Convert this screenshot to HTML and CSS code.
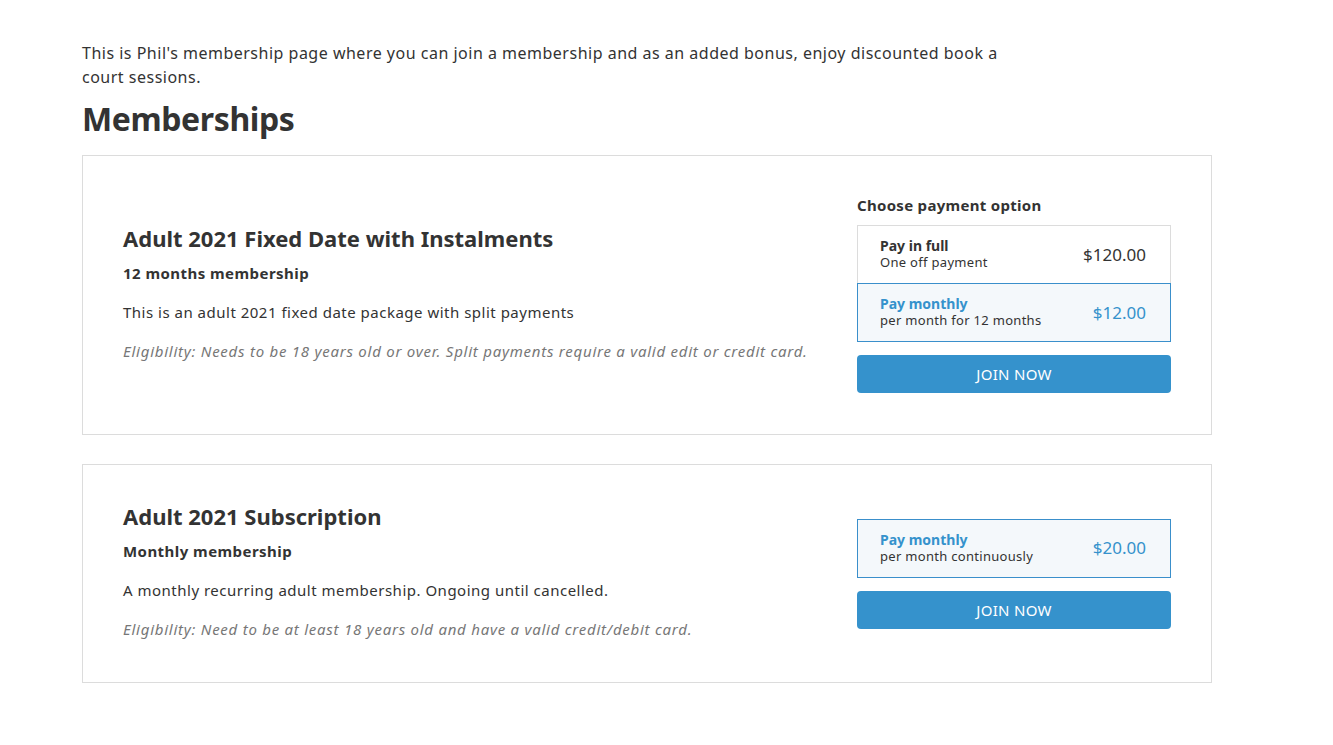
FILE: index.html
```html
<!DOCTYPE html>
<html lang="en">
<head>
    <meta charset="UTF-8">
    <meta name="viewport" content="width=device-width, initial-scale=1.0">
    <title>Memberships</title>
    <link rel="stylesheet" href="styles.css">
</head>
<body>

    <main class="page">
        <p class="intro">This is Phil's membership page where you can join a membership and as an added bonus, enjoy discounted book a court sessions.</p>

        <h1>Memberships</h1>

        <!-- Fixed date membership -->
        <section class="card">
            <div class="card-info">
                <h2>Adult 2021 Fixed Date with Instalments</h2>
                <h3>12 months membership</h3>
                <p class="desc">This is an adult 2021 fixed date package with split payments</p>
                <p class="elig">Eligibility: Needs to be 18 years old or over. Split payments require a valid edit or credit card.</p>
            </div>
            <div class="card-pay choose">
                <h4>Choose payment option</h4>
                <div class="options">
                    <div class="option">
                        <div class="option-text">
                            <strong>Pay in full</strong>
                            <span>One off payment</span>
                        </div>
                        <div class="price">$120.00</div>
                    </div>
                    <div class="option selected">
                        <div class="option-text">
                            <strong>Pay monthly</strong>
                            <span>per month for 12 months</span>
                        </div>
                        <div class="price">$12.00</div>
                    </div>
                </div>
                <button class="join">JOIN NOW</button>
            </div>
        </section>

        <!-- Subscription -->
        <section class="card">
            <div class="card-info">
                <h2>Adult 2021 Subscription</h2>
                <h3>Monthly membership</h3>
                <p class="desc">A monthly recurring adult membership. Ongoing until cancelled.</p>
                <p class="elig">Eligibility: Need to be at least 18 years old and have a valid credit/debit card.</p>
            </div>
            <div class="card-pay">
                <div class="options">
                    <div class="option selected">
                        <div class="option-text">
                            <strong>Pay monthly</strong>
                            <span>per month continuously</span>
                        </div>
                        <div class="price">$20.00</div>
                    </div>
                </div>
                <button class="join">JOIN NOW</button>
            </div>
        </section>
    </main>

</body>
</html>
```

FILE: styles.css
```css
/* Base */
body {
    margin: 0;
    font-family: 'Noto Sans', 'Open Sans', sans-serif;
    color: #333;
    background: #fff;
}

.page {
    width: 1130px;
    margin-left: 82px;
    padding-top: 41px;
}

.intro {
    margin: 0;
    max-width: 940px;
    font-size: 16px;
    line-height: 24px;
    letter-spacing: 0.5px;
}

h1 {
    margin: 10px 0 16px;
    font-size: 32px;
    line-height: 40px;
    font-weight: 700;
    letter-spacing: -0.4px;
}

/* Membership card */
.card {
    display: flex;
    align-items: center;
    justify-content: space-between;
    border: 1px solid #dcdcdc;
    padding: 36px 40px;
    margin-bottom: 29px;
}

.card-info {
    padding-bottom: 5px;
}

.card-info h2 {
    margin: 0;
    font-size: 22px;
    line-height: 30px;
}

.card-info h3 {
    margin: 8px 0 0;
    font-size: 15px;
    line-height: 24px;
    letter-spacing: 0.45px;
}

.card-info p {
    margin: 15px 0 0;
    font-size: 15px;
    line-height: 24px;
    letter-spacing: 0.5px;
}

.card-info .elig {
    font-style: italic;
    color: #777;
    letter-spacing: 0.75px;
}

/* Payment column */
.card-pay {
    width: 314px;
    flex-shrink: 0;
    padding: 2px 0;
}

.card-pay.choose {
    padding: 0 0 5px;
}

.card-pay h4 {
    margin: 0 0 7px;
    font-size: 15px;
    line-height: 26px;
    letter-spacing: 0.3px;
}

.option {
    display: flex;
    align-items: center;
    justify-content: space-between;
    border: 1px solid #dcdcdc;
    padding: 12px 24px 13px 22px;
    background: #fff;
}

.option + .option {
    margin-top: -1px;
}

.option-text strong {
    display: block;
    font-size: 14px;
    line-height: 16px;
}

.option-text span {
    display: block;
    font-size: 13px;
    line-height: 16px;
    letter-spacing: 0.3px;
}

.price {
    font-size: 17px;
}

.option.selected {
    position: relative;
    border-color: #3a8fcb;
    background: #f4f8fb;
}

.option.selected strong,
.option.selected .price {
    color: #3592cc;
}

.join {
    display: block;
    width: 100%;
    height: 38px;
    margin-top: 13px;
    border: none;
    border-radius: 4px;
    background: #3592cc;
    color: #fff;
    font-family: inherit;
    font-size: 15px;
    letter-spacing: 0.3px;
    cursor: pointer;
}
```
